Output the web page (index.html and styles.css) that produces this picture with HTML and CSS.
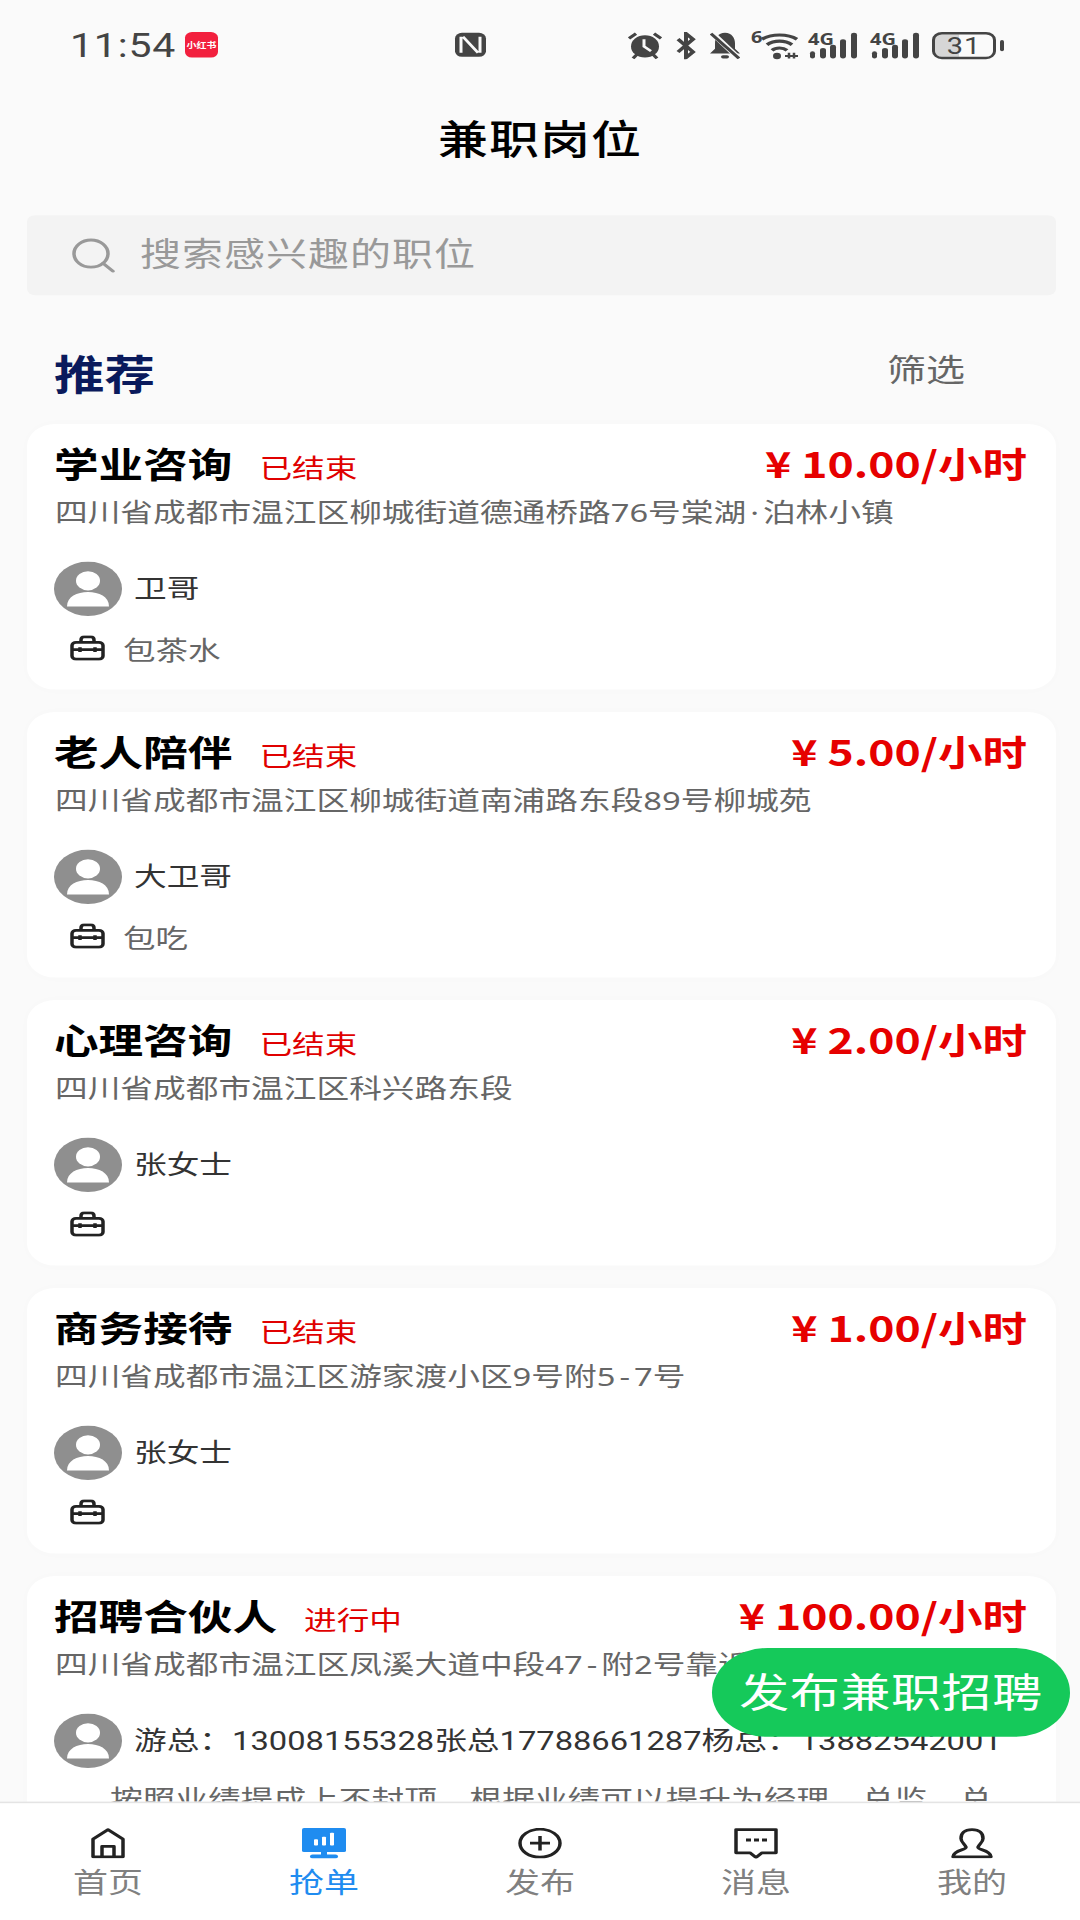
FILE: index.html
```html
<!DOCTYPE html>
<html lang="zh-CN">
<head>
<meta charset="utf-8">
<title>兼职岗位</title>
<link rel="stylesheet" href="styles.css">
</head>
<body>
<svg class="defs" aria-hidden="true">
  <symbol id="avatar" viewBox="0 0 68 68">
    <circle cx="34" cy="34" r="34" fill="#8f8f8f"/>
    <ellipse cx="34" cy="24" rx="12" ry="12" fill="#fff"/>
    <path d="M13 56C13 44 23 38 34 38C45 38 55 44 55 56Z" fill="#fff"/>
  </symbol>
  <symbol id="case" viewBox="0 0 35 32">
    <rect x="2" y="9" width="31" height="21" rx="4" fill="none" stroke="#222" stroke-width="3.5"/>
    <path d="M11 9V6C11 3 12 2 14 2H21C23 2 24 3 24 6V9M2 18H33M10 15V21M25 15V21" fill="none" stroke="#222" stroke-width="3.5"/>
  </symbol>
  <symbol id="bars" viewBox="0 0 50 34">
    <rect x="2" y="24" width="5" height="9" rx="2.5" fill="#444"/>
    <rect x="12" y="20" width="6" height="13" rx="3" fill="#444"/>
    <rect x="22" y="16" width="6" height="17" rx="3" fill="#444"/>
    <rect x="32" y="9" width="6" height="24" rx="3" fill="#444"/>
    <rect x="43" y="1" width="6" height="32" rx="3" fill="#444"/>
  </symbol>
</svg>

<div class="screen">
  <div class="status">
    <span class="time">11:54</span>
    <span class="app-badge">小红书</span>
    <svg class="nfc" width="33" height="32" viewBox="0 0 33 32"><rect x="1" y="1" width="31" height="30" rx="7" fill="#444"/><path d="M7 6V26M26 6V26M9 6L24 26" fill="none" stroke="#f9f9f9" stroke-width="3"/></svg>
    <div class="sys">
      <svg width="34" height="34" viewBox="0 0 34 34"><circle cx="17" cy="18" r="14" fill="#444"/><path d="M16 9V18L23 24" fill="none" stroke="#f9f9f9" stroke-width="3"/><path d="M1 8L8 2M33 8L26 2M5 33L9 28M29 33L25 28" stroke="#444" stroke-width="3.5"/></svg>
      <svg class="gap-bt" width="22" height="34" viewBox="0 0 22 34"><path d="M3 9L18 25L11 32V2L18 9L3 25" fill="none" stroke="#444" stroke-width="4"/></svg>
      <svg class="gap-bell" width="30" height="34" viewBox="0 0 30 34"><path d="M15 1C8 1 5 8 5 14V21L0 27H30L25 21V14C25 8 22 1 15 1Z" fill="#444"/><rect x="11" y="29" width="8" height="4" rx="2" fill="#444"/><path d="M1 0L29 33" stroke="#f9f9f9" stroke-width="6"/><path d="M1 2L29 33" stroke="#444" stroke-width="3.5"/></svg>
      <svg class="gap-wifi sig" width="47" height="34" viewBox="0 0 47 34"><text x="0" y="14" class="sig-text">6</text><path d="M11 9C20 2 37 2 46 9M16 16C23 10 34 10 41 16M21 23C25 19 32 19 36 23" fill="none" stroke="#444" stroke-width="4"/><circle cx="26" cy="30" r="4" fill="#444"/><path d="M34 30H47M38 26V33M43 26V33" stroke="#444" stroke-width="2.5"/></svg>
      <svg class="gap-sig sig" width="50" height="34" viewBox="0 0 50 34"><text x="0" y="16" class="sig-text">4G</text><use href="#bars" width="50" height="34"/></svg>
      <svg class="gap-sig2 sig" width="50" height="34" viewBox="0 0 50 34"><text x="0" y="16" class="sig-text">4G</text><use href="#bars" width="50" height="34"/></svg>
      <div class="battery">31</div>
      <span class="nub"></span>
    </div>
  </div>

  <header class="nav">兼职岗位</header>

  <div class="search">
    <svg class="search-icon" width="44" height="44" viewBox="0 0 44 44"><circle cx="20" cy="20" r="17" fill="none" stroke="#999" stroke-width="3.5"/><path d="M32 32L42 42" stroke="#999" stroke-width="3.5" stroke-linecap="round"/></svg>
    <span class="search-text">搜索感兴趣的职位</span>
  </div>

  <div class="section">
    <h2 class="section-title">推荐</h2>
    <span class="filter">筛选</span>
  </div>

  <main class="list">
    <article class="card">
      <div class="row-title"><h3 class="job">学业咨询</h3><span class="state">已结束</span><span class="price">¥ 10.00/小时</span></div>
      <p class="addr">四川省成都市温江区柳城街道德通桥路76号棠湖<span class="sep">·</span>泊林小镇</p>
      <div class="person"><svg class="avatar"><use href="#avatar"/></svg><span class="name">卫哥</span></div>
      <div class="tag"><svg class="case"><use href="#case"/></svg><span class="tag-text">包茶水</span></div>
    </article>
    <article class="card">
      <div class="row-title"><h3 class="job">老人陪伴</h3><span class="state">已结束</span><span class="price">¥ 5.00/小时</span></div>
      <p class="addr">四川省成都市温江区柳城街道南浦路东段89号柳城苑</p>
      <div class="person"><svg class="avatar"><use href="#avatar"/></svg><span class="name">大卫哥</span></div>
      <div class="tag"><svg class="case"><use href="#case"/></svg><span class="tag-text">包吃</span></div>
    </article>
    <article class="card">
      <div class="row-title"><h3 class="job">心理咨询</h3><span class="state">已结束</span><span class="price">¥ 2.00/小时</span></div>
      <p class="addr">四川省成都市温江区科兴路东段</p>
      <div class="person"><svg class="avatar"><use href="#avatar"/></svg><span class="name">张女士</span></div>
      <div class="tag"><svg class="case"><use href="#case"/></svg></div>
    </article>
    <article class="card">
      <div class="row-title"><h3 class="job">商务接待</h3><span class="state">已结束</span><span class="price">¥ 1.00/小时</span></div>
      <p class="addr">四川省成都市温江区游家渡小区9号附5<span class="sep">-</span>7号</p>
      <div class="person"><svg class="avatar"><use href="#avatar"/></svg><span class="name">张女士</span></div>
      <div class="tag"><svg class="case"><use href="#case"/></svg></div>
    </article>
    <article class="card">
      <div class="row-title"><h3 class="job">招聘合伙人</h3><span class="state">进行中</span><span class="price">¥ 100.00/小时</span></div>
      <p class="addr">四川省成都市温江区凤溪大道中段47<span class="sep">-</span>附2号靠近凤溪大道</p>
      <div class="person"><svg class="avatar"><use href="#avatar"/></svg><span class="name">游总：13008155328张总17788661287杨总：13882542001</span></div>
      <p class="desc">按照业绩提成上不封顶，根据业绩可以提升为经理，总监，总</p>
    </article>
  </main>

  <button class="fab" type="button">发布兼职招聘</button>

  <nav class="tabs">
    <div class="tab">
      <svg class="tab-icon" width="34" height="38" viewBox="0 0 34 38"><path d="M2 36V14L17 2L32 14V36ZM11 36V23H23V36" fill="none" stroke="#222" stroke-width="3.5" stroke-linejoin="round"/></svg>
      <span class="tab-label">首页</span>
    </div>
    <div class="tab tab-on">
      <svg class="tab-icon" width="44" height="38" viewBox="0 0 44 38"><rect width="44" height="30" rx="2" fill="#1f8cf0"/><rect x="12" y="14" width="4" height="8" rx="1" fill="#fff"/><rect x="20" y="11" width="4" height="11" rx="1" fill="#fff"/><rect x="28" y="6" width="4" height="16" rx="1" fill="#fff"/><rect x="19" y="30" width="6" height="4" fill="#1f8cf0"/><rect x="8" y="33" width="28" height="5" rx="2.5" fill="#1f8cf0"/></svg>
      <span class="tab-label">抢单</span>
    </div>
    <div class="tab">
      <svg class="tab-icon" width="44" height="38" viewBox="0 0 44 38"><ellipse cx="22" cy="19" rx="20" ry="17.5" fill="none" stroke="#222" stroke-width="3.5"/><path d="M12 19H32M22 10V28" stroke="#222" stroke-width="3.5"/></svg>
      <span class="tab-label">发布</span>
    </div>
    <div class="tab">
      <svg class="tab-icon" width="44" height="38" viewBox="0 0 44 38"><path d="M2 2H42V31H28L22 37L16 31H2Z" fill="none" stroke="#222" stroke-width="3.5" stroke-linejoin="round"/><path d="M12 15H17M20 15H25M28 15H33" stroke="#222" stroke-width="3.5"/></svg>
      <span class="tab-label">消息</span>
    </div>
    <div class="tab">
      <svg class="tab-icon" width="42" height="38" viewBox="0 0 42 38"><path d="M21 2C13 2 10 7 10 13C10 18 14 20 15 24C15 28 3 27 2 36H40C39 27 27 28 27 24C28 20 32 18 32 13C32 7 29 2 21 2Z" fill="none" stroke="#222" stroke-width="3.5" stroke-linejoin="round"/></svg>
      <span class="tab-label">我的</span>
    </div>
  </nav>
</div>
</body>
</html>
```

FILE: styles.css
```css
* { box-sizing: border-box; }
html, body {
  margin: 0;
  padding: 0;
  width: 1080px;
  height: 1920px;
  overflow: hidden;
  background: #fafafa;
}
.defs { position: absolute; width: 0; height: 0; }

/* The reference is a 1080x2400 capture squeezed to 1920 tall */
.screen {
  position: relative;
  width: 1080px;
  height: 2400px;
  overflow: hidden;
  transform: scaleY(0.8);
  transform-origin: 0 0;
  background: #fafafa;
  font-family: "Noto Sans CJK SC", "Noto Sans", sans-serif;
  color: #333;
}

.status {
  height: 115px;
  padding: 40px 0 0 70px;
  display: flex;
  align-items: flex-start;
}
.time {
  font-family: Roboto, sans-serif;
  font-size: 41px;
  line-height: 34px;
  letter-spacing: 0.8px;
  color: #444;
}
.app-badge {
  margin-left: 9px;
  width: 33px;
  height: 32px;
  border-radius: 7px;
  background: #f2203e;
  color: #fff;
  font-size: 10px;
  font-weight: 700;
  line-height: 32px;
  text-align: center;
  white-space: nowrap;
}
.nfc { margin-left: 236px; }
.sys {
  margin-left: 141px;
  display: flex;
  align-items: flex-start;
}
.sig { overflow: visible; }
.gap-bt { margin-left: 13px; }
.gap-bell { margin-left: 13px; }
.gap-wifi { margin-left: 11px; }
.gap-sig { margin-left: 10px; }
.gap-sig2 { margin-left: 12px; }
.sig-text {
  font-family: "Noto Sans", sans-serif;
  font-size: 20px;
  font-weight: 700;
  fill: #444;
}
.battery {
  margin-left: 12px;
  width: 64px;
  height: 34px;
  border: 3px solid #444;
  border-radius: 10px;
  background: linear-gradient(90deg, #d6d6d6 42%, #fafafa 42%);
  font-family: Roboto, sans-serif;
  font-size: 29px;
  line-height: 28px;
  text-align: center;
  letter-spacing: 1px;
  color: #444;
}
.nub {
  margin: 10px 0 0 4px;
  width: 4px;
  height: 14px;
  border-radius: 2px;
  background: #444;
}

.nav {
  height: 116px;
  padding-bottom: 6px;
  display: flex;
  align-items: center;
  justify-content: center;
  font-size: 50px;
  font-weight: 500;
  letter-spacing: 1px;
  color: #000;
}

.search {
  margin: 38px 24px 0 27px;
  height: 100px;
  padding-left: 44px;
  display: flex;
  align-items: center;
  gap: 25px;
  background: #f3f3f3;
  border-radius: 8px;
}
.search-text {
  padding-bottom: 8px;
  font-size: 41px;
  letter-spacing: 1px;
  color: #999;
}

.section {
  padding: 68px 115px 37px 55px;
  display: flex;
  justify-content: space-between;
  align-items: flex-start;
}
.section-title {
  margin: 0 0 0 -1px;
  font-size: 50.5px;
  line-height: 56px;
  font-weight: 700;
  color: #0a1a5c;
}
.filter {
  font-size: 39px;
  line-height: 44px;
  color: #666;
}

.list {
  padding: 0 24px 0 27px;
  display: flex;
  flex-direction: column;
  gap: 28px;
}
.card {
  padding: 23px 29px 29px 28px;
  height: 332px;
  flex: none;
  background: #fff;
  border-radius: 28px;
  box-shadow: 0 0 12px rgba(0, 0, 0, 0.015);
}
.card:last-child { height: 500px; }
.row-title {
  height: 52px;
  display: flex;
  align-items: baseline;
}
.job {
  margin: 0 0 0 -1px;
  font-size: 44.6px;
  line-height: 52px;
  font-weight: 700;
  color: #000;
}
.state {
  margin-left: 27px;
  font-size: 32.7px;
  color: #e00000;
}
.price {
  margin-left: auto;
  font-size: 44.5px;
  line-height: 52px;
  font-weight: 700;
  color: #e60000;
}
.addr {
  margin: 11px 0 0;
  font-family: "Noto Sans", "Noto Sans CJK SC", sans-serif;
  font-size: 32.7px;
  line-height: 48px;
  color: #666;
  white-space: nowrap;
}
.sep { margin: 0 4px; }
.person {
  margin: 38px 0 0 -1px;
  height: 68px;
  display: flex;
  align-items: center;
  gap: 12px;
}
.avatar { width: 68px; height: 68px; flex: none; }
.name {
  padding-bottom: 6px;
  font-family: Roboto, "Noto Sans CJK SC", sans-serif;
  font-size: 32.7px;
  color: #333;
  white-space: nowrap;
}
.tag {
  margin-top: 18px;
  padding-left: 15px;
  height: 44px;
  display: flex;
  align-items: center;
  gap: 18px;
}
.case { width: 35px; height: 32px; flex: none; }
.tag-text { font-size: 32.5px; color: #666; }
.desc {
  margin: 13px 0 0;
  text-indent: 55px;
  font-size: 32.7px;
  line-height: 48px;
  color: #666;
  white-space: nowrap;
}

.fab {
  position: absolute;
  left: 712px;
  top: 2060px;
  width: 358px;
  height: 111px;
  padding: 0 0 8px;
  border: 0;
  border-radius: 56px;
  background: #15c95a;
  color: #fff;
  font-family: inherit;
  font-size: 50px;
  letter-spacing: 0.6px;
}

.tabs {
  position: absolute;
  left: 0;
  right: 0;
  bottom: 0;
  height: 148px;
  padding-top: 31px;
  display: grid;
  grid-template-columns: repeat(5, 1fr);
  background: #fff;
  border-top: 2px solid #e4e4e4;
}
.tab {
  display: flex;
  flex-direction: column;
  align-items: center;
}
.tab-icon { flex: none; }
.tab-label {
  margin-top: 4px;
  font-size: 35px;
  line-height: 48px;
  color: #808080;
}
.tab-on .tab-label { color: #1f8cf0; }
```
